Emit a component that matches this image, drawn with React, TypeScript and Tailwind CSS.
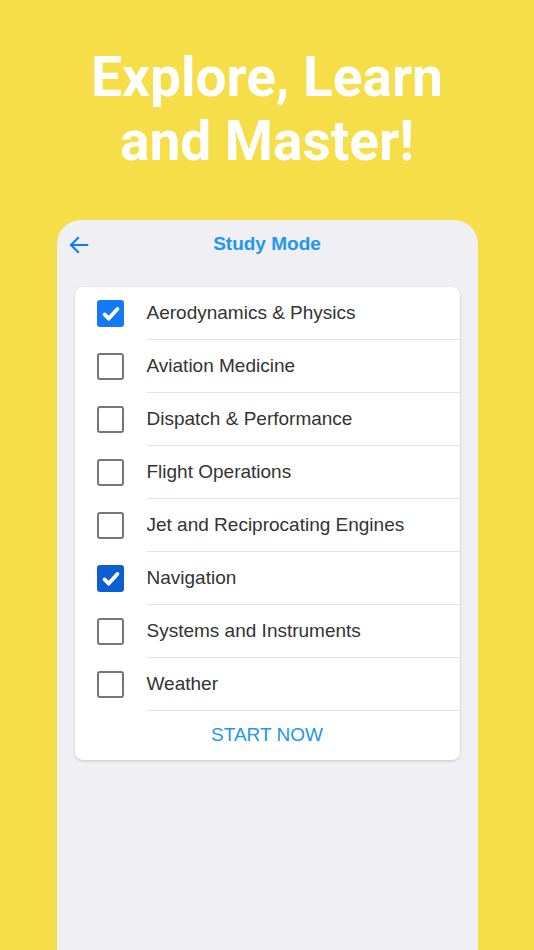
import { useState } from 'react';

const topics = [
  'Aerodynamics & Physics',
  'Aviation Medicine',
  'Dispatch & Performance',
  'Flight Operations',
  'Jet and Reciprocating Engines',
  'Navigation',
  'Systems and Instruments',
  'Weather',
];

function Checkbox({ checked, dark }: { checked: boolean; dark?: boolean }) {
  if (!checked) {
    return <div className="h-[27px] w-[27px] rounded-[3px] border-2 border-[#767676] bg-white" />;
  }
  return (
    <div
      className={`flex h-[27px] w-[27px] items-center justify-center rounded-[3px] ${dark ? 'bg-[#0b5fd0]' : 'bg-[#1479f7]'}`}
    >
      <svg viewBox="0 0 24 24" className="h-[22px] w-[22px]" fill="none" stroke="white" strokeWidth="4.2" strokeLinecap="round" strokeLinejoin="round">
        <path d="M5 12.5l4.5 4.5L19 6.5" />
      </svg>
    </div>
  );
}

export default function App() {
  const [selected, setSelected] = useState<string[]>(['Aerodynamics & Physics', 'Navigation']);

  const toggle = (t: string) =>
    setSelected((s) => (s.includes(t) ? s.filter((x) => x !== t) : [...s, t]));

  return (
    <div className="flex h-[950px] w-[534px] flex-col items-center overflow-hidden bg-[#f5de47]">
      <h1 className="mt-[45px] text-center text-[55px] font-bold leading-[64px] text-white [font-family:Roboto,sans-serif]">
        Explore, Learn
        <br />
        and Master!
      </h1>

      <div className="mt-[47px] w-[421px] flex-1 rounded-t-[24px] bg-[#efeff4] [font-family:'Liberation_Sans',Arial,sans-serif]">
        <header className="relative flex h-[48px] items-center justify-center">
          <button className="absolute left-[10px] top-[13px] text-[#1479f7]">
            <svg viewBox="0 0 24 24" className="h-[24px] w-[24px]" fill="none" stroke="currentColor" strokeWidth="2.2" strokeLinecap="square">
              <path d="M20 12H5M11 5l-7 7 7 7" />
            </svg>
          </button>
          <span className="text-[19px] font-bold text-[#2196f3]">Study Mode</span>
        </header>

        <div className="mx-[18px] mt-[19px] overflow-hidden rounded-[8px] bg-white shadow-[0_1px_3px_rgba(0,0,0,0.18)]">
          {topics.map((t, i) => (
            <div key={t} className="flex h-[53px] cursor-pointer items-center" onClick={() => toggle(t)}>
              <div className="flex w-[72px] justify-center">
                <Checkbox checked={selected.includes(t)} dark={i === 5} />
              </div>
              <div className="flex h-full flex-1 items-center border-b border-[#e3e3e6] text-[19px] text-[#333333]">
                {t}
              </div>
            </div>
          ))}
          <div className="flex h-[49px] items-center justify-center text-[19px] text-[#2196f3]">START NOW</div>
        </div>
      </div>
    </div>
  );
}
